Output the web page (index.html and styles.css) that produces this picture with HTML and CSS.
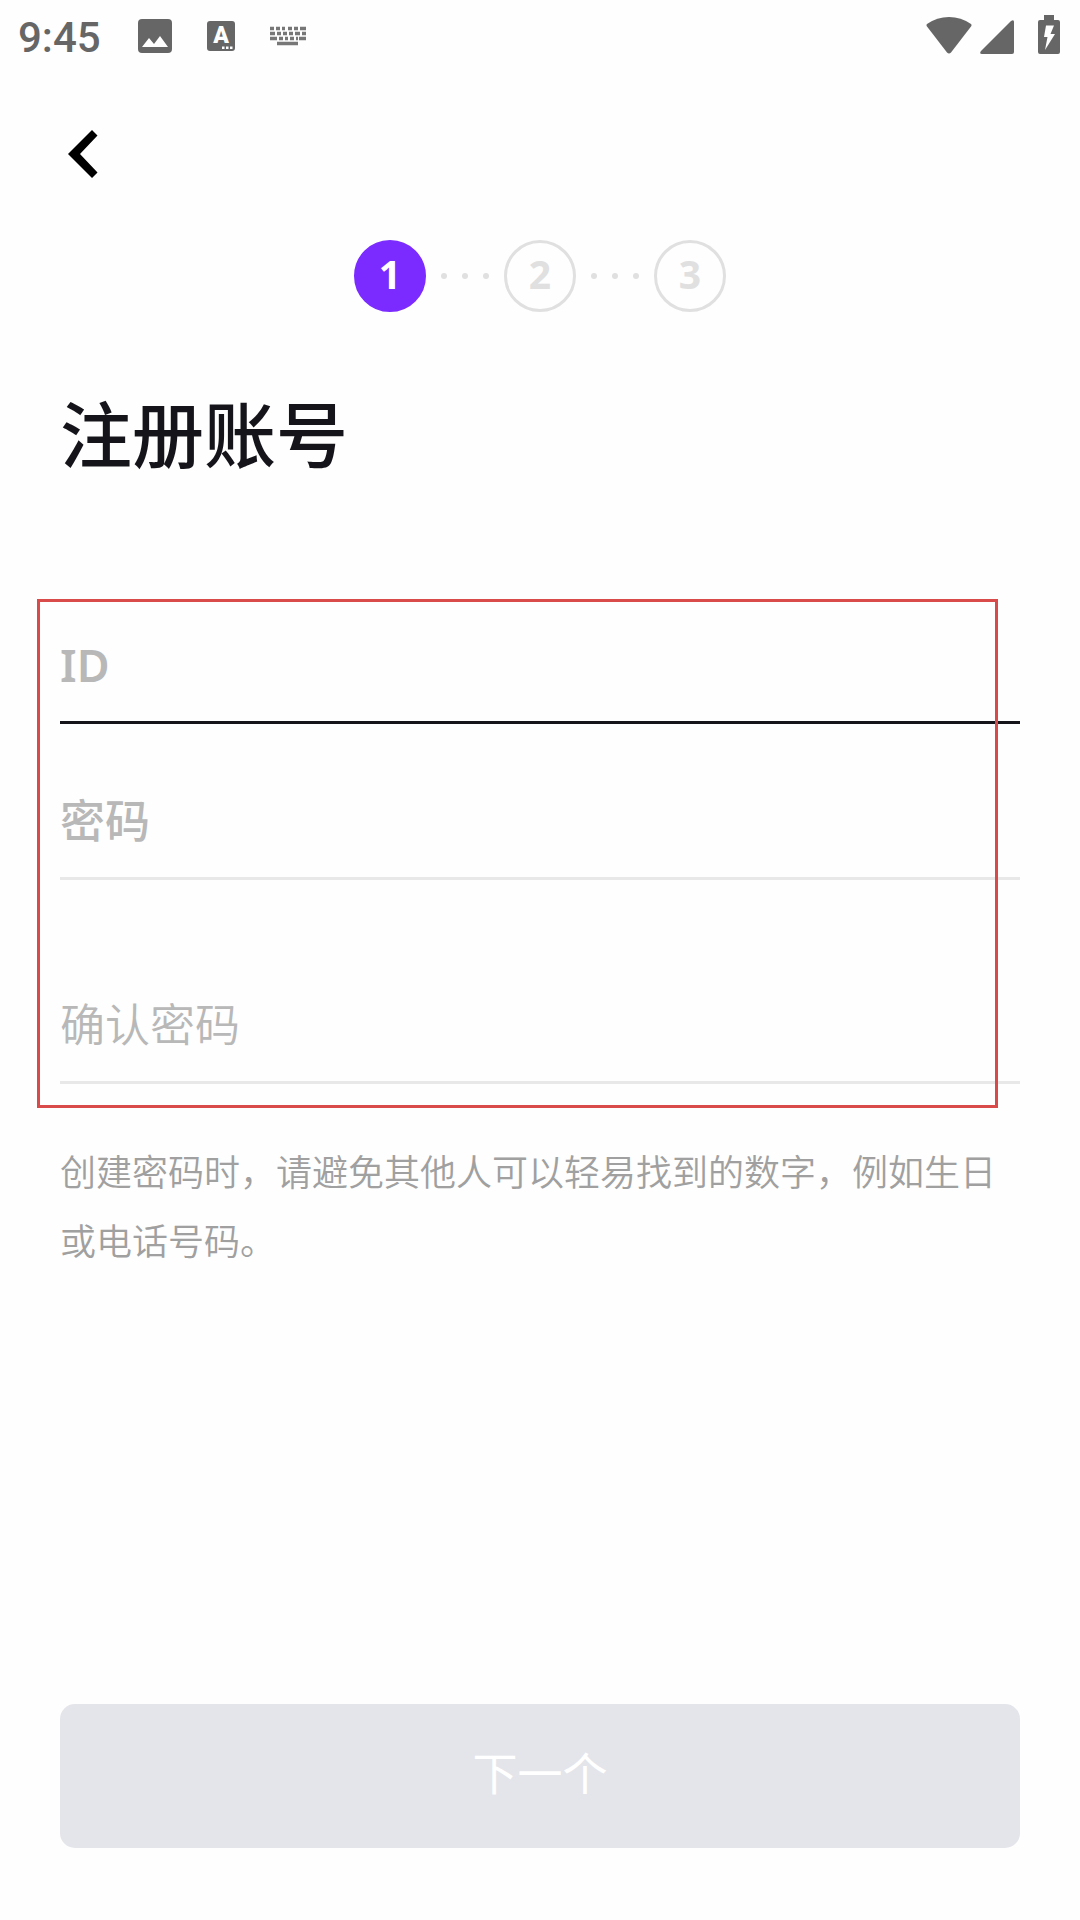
FILE: index.html
```html
<!DOCTYPE html>
<html lang="zh-CN">
<head>
    <meta charset="UTF-8">
    <meta name="viewport" content="width=device-width, initial-scale=1.0">
    <title>注册账号</title>
    <link rel="stylesheet" href="styles.css">
</head>
<body>
    <div class="status-bar">
        <span class="time">9:45</span>
        <div class="notifications">
            <svg width="34" height="34" viewBox="0 0 34 34">
                <rect width="34" height="34" rx="4" fill="#666"/>
                <path d="M4 28l7-9 5 6 6-8 8 11z" fill="#fefefe"/>
            </svg>
            <svg width="28" height="30" viewBox="0 0 28 30">
                <rect width="28" height="30" rx="3" fill="#666"/>
                <text x="14" y="22" text-anchor="middle" class="badge-letter">A</text>
                <path d="M15 25.500h2.500v2.500h-2.500zM19 25.500h2.500v2.500h-2.500zM23 25.500h2.500v2.500h-2.500z" fill="#fefefe"/>
            </svg>
            <svg width="36" height="20" viewBox="0 0 36 20" fill="none" stroke="#777" stroke-width="3.5">
                <path d="M0 2.500h4M6 2.500h4M12 2.500h3M18 2.500h4M24 2.500h4M30 2.500h6"/>
                <path d="M0 7.500h5M7 7.500h4M13 7.500h4M19 7.500h4M25 7.500h5M32 7.500h4"/>
                <path d="M0 12.500h7M9 12.500h4M15 12.500h3M20 12.500h4M26 12.500h2M29 12.500h7"/>
                <path d="M7 17.500h21"/>
            </svg>
        </div>
        <div class="system">
            <svg class="wifi" width="46" height="37" viewBox="0 0 46 37">
                <path d="M1 7Q0 8 1 9.500L21 35.500Q23 37.500 25 35.500L45 9.500Q46 8 45 7Q35 0 23 0Q11 0 1 7z" fill="#666"/>
            </svg>
            <svg class="signal" width="34" height="34" viewBox="0 0 34 34">
                <path d="M1 31L31 1Q34-1 34 2V32Q34 34 32 34H2Q-1 34 1 31z" fill="#666"/>
            </svg>
            <svg class="battery" width="22" height="39" viewBox="0 0 22 39">
                <path d="M6 0h10v5h4q2 0 2 2v30q0 2-2 2h-18q-2 0-2-2v-30q0-2 2-2h4z" fill="#666"/>
                <path d="M8 10.500h8l-3.500 8.500h4.500l-10 16 2.500-13h-3.500z" fill="#fefefe"/>
            </svg>
        </div>
    </div>

    <main class="container">
        <button type="button" class="back" aria-label="返回">
            <svg width="30" height="48" viewBox="0 0 30 48">
                <path d="M24 0l5.500 5.500L12 24l17.500 18.500L24 48L0 24z" fill="#000"/>
            </svg>
        </button>

        <div class="steps">
            <span class="step active">1</span>
            <i class="dot"></i><i class="dot"></i><i class="dot"></i>
            <span class="step">2</span>
            <i class="dot"></i><i class="dot"></i><i class="dot"></i>
            <span class="step">3</span>
        </div>

        <h1>注册账号</h1>

        <form class="signup">
            <div class="fields">
                <input type="text" class="field current" placeholder="ID" aria-label="ID">
                <input type="password" class="field" placeholder="密码" aria-label="密码">
                <input type="password" class="field confirm" placeholder="确认密码" aria-label="确认密码">
                <div class="highlight"></div>
            </div>
            <p class="hint">创建密码时，请避免其他人可以轻易找到的数字，例如生日或电话号码。</p>
            <button type="submit" class="next" disabled>下一个</button>
        </form>
    </main>
</body>
</html>
```
FILE: styles.css
```css
* {
    box-sizing: border-box;
}
body {
    display: flex;
    flex-direction: column;
    min-height: 100vh;
    margin: 0;
    background-color: #fefefe;
    font-family: 'Noto Sans', 'Noto Sans CJK SC', sans-serif;
    color: #15141a;
}
svg {
    display: block;
}
.status-bar {
    display: flex;
    align-items: center;
    height: 72px;
    padding: 0 20px 0 18px;
    color: #666;
}
.time {
    padding-top: 3px;
    font-family: Roboto, sans-serif;
    font-size: 42px;
    font-weight: 500;
    line-height: 72px;
}
.notifications {
    display: flex;
    align-items: center;
    gap: 35px;
    margin-left: 37px;
}
.badge-letter {
    font-family: Roboto, sans-serif;
    font-size: 23px;
    font-weight: 900;
    fill: #fefefe;
}
.system {
    display: flex;
    align-items: flex-end;
    height: 36px;
    margin-left: auto;
}
.signal {
    margin: 0 24px 0 8px;
}
.container {
    display: flex;
    flex: 1;
    flex-direction: column;
    padding: 48px 60px 72px;
}
.back {
    align-self: flex-start;
    padding: 10px 8px;
    border: 0;
    background: none;
    cursor: pointer;
}
.steps {
    display: flex;
    justify-content: center;
    align-items: center;
    gap: 15px;
    margin-top: 52px;
}
.step {
    width: 72px;
    height: 72px;
    border: 3px solid #e0e0e0;
    border-radius: 50%;
    font-size: 39px;
    font-weight: 700;
    line-height: 62px;
    text-align: center;
    color: #e0e0e0;
}
.step.active {
    border-color: #7b2bff;
    background-color: #7b2bff;
    color: #fff;
}
.dot {
    width: 6px;
    height: 6px;
    border-radius: 50%;
    background-color: #e0e0e0;
}
h1 {
    margin: 70px 0 0;
    font-size: 72px;
    font-weight: 500;
    line-height: 104px;
}
.signup {
    display: flex;
    flex: 1;
    flex-direction: column;
    margin-top: 82px;
}
.fields {
    display: flex;
    flex-direction: column;
    position: relative;
}
.field {
    width: 100%;
    height: 156px;
    padding: 40px 0 0;
    border: 0;
    border-bottom: 3px solid #e8e8e8;
    border-radius: 0;
    outline: none;
    background: none;
    font-family: inherit;
    font-size: 45px;
    font-weight: 500;
    color: #15141a;
}
.field::placeholder {
    color: #b8b8b8;
    opacity: 1;
}
.field.current {
    border-bottom-color: #15141a;
    font-weight: 600;
}
.field.confirm {
    margin-top: 48px;
    font-weight: 350;
}
/* red frame drawn over the inputs */
.highlight {
    position: absolute;
    top: 31px;
    right: 22px;
    bottom: -24px;
    left: -23px;
    border: 3px solid #d94a4a;
    pointer-events: none;
}
.hint {
    margin: 54px 0 0;
    font-size: 36px;
    font-weight: 350;
    line-height: 69px;
    color: #a0a0a0;
}
.next {
    height: 144px;
    margin-top: auto;
    padding: 0 0 10px;
    border: 0;
    border-radius: 15px;
    background-color: #e4e5ea;
    font-family: inherit;
    font-size: 45px;
    font-weight: 400;
    color: #fff;
}
```
